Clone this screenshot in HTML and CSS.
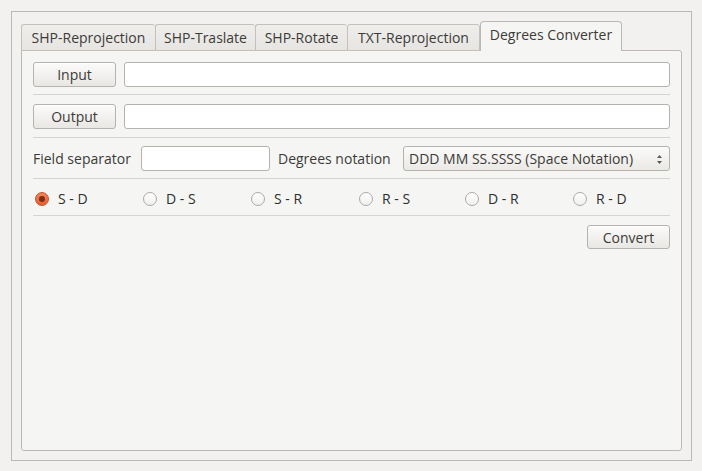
FILE: index.html
```html
<!DOCTYPE html>
<html>
<head>
<meta charset="utf-8">
<link rel="stylesheet" href="styles.css">
</head>
<body>
<div class="frame">
  <div class="tabbar">
    <div class="tab t1">SHP-Reprojection</div>
    <div class="tab t2">SHP-Traslate</div>
    <div class="tab t3">SHP-Rotate</div>
    <div class="tab t4">TXT-Reprojection</div>
    <div class="tab active t5">Degrees Converter</div>
  </div>
  <div class="pane">
    <div class="row r1">
      <button class="btn io">Input</button>
      <div class="field grow"></div>
    </div>
    <div class="sep s1"></div>
    <div class="row r2">
      <button class="btn io">Output</button>
      <div class="field grow"></div>
    </div>
    <div class="sep s2"></div>
    <div class="row r3">
      <span class="label lbl-sep">Field separator</span>
      <div class="field sepfield"></div>
      <span class="label lbl-not">Degrees notation</span>
      <div class="combo grow">
        <span>DDD MM SS.SSSS (Space Notation)</span>
        <svg class="arrows" width="7" height="11" viewBox="0 0 7 11"><path d="M3.5 1 L6 4 L1 4 Z" fill="#5a5955"/><path d="M3.5 10 L6 7 L1 7 Z" fill="#5a5955"/></svg>
      </div>
    </div>
    <div class="sep s3"></div>
    <div class="radios">
      <div class="radio"><span class="dot on"></span><span>S - D</span></div>
      <div class="radio"><span class="dot"></span><span>D - S</span></div>
      <div class="radio"><span class="dot"></span><span>S - R</span></div>
      <div class="radio"><span class="dot"></span><span>R - S</span></div>
      <div class="radio"><span class="dot"></span><span>D - R</span></div>
      <div class="radio"><span class="dot"></span><span>R - D</span></div>
    </div>
    <div class="sep s4"></div>
    <div class="row r5">
      <button class="btn convert">Convert</button>
    </div>
  </div>
</div>
</body>
</html>
```
FILE: styles.css
```css
* { box-sizing: border-box; }
html, body { margin: 0; padding: 0; }
body {
  background: #f2f1f0;
  font-family: "Open Sans", "DejaVu Sans", sans-serif;
  font-size: 14px;
  color: #3c3b37;
  width: 702px;
  height: 471px;
  overflow: hidden;
}
.frame {
  margin: 11px 0 0 11px;
  width: 681px;
  height: 450px;
  border: 1px solid #bcb9b4;
  padding: 9px 9px 9px 9px;
  display: flex;
  flex-direction: column;
}
.tabbar {
  display: flex;
  align-items: flex-end;
  height: 30px;
  margin-bottom: -1px;
  position: relative;
  z-index: 1;
}
.tab {
  height: 27px;
  line-height: 25px;
  text-align: center;
  background: linear-gradient(#efeeec, #e6e5e2);
  border: 1px solid #c4c1bc;
  border-right: none;
  border-radius: 3px 3px 0 0;
  color: #3c3b37;
  white-space: nowrap;
}
.t1 { width: 134px; }
.t2 { width: 100px; }
.t3 { width: 92px; }
.t4 { width: 133px; border-right: 1px solid #c4c1bc; }
.tab.active {
  width: 142px;
  height: 30px;
  line-height: 26px;
  background: #f5f5f4;
  border: 1px solid #bcb9b4;
  border-bottom: none;
  border-radius: 4px 4px 0 0;
  margin-left: 0;
}
.pane {
  flex: 1;
  width: 661px;
  background: #f5f5f4;
  border: 1px solid #bcb9b4;
  border-radius: 0 3px 3px 3px;
  padding: 11px 11px 0 11px;
  display: flex;
  flex-direction: column;
}
.row {
  display: flex;
  align-items: center;
  height: 25px;
}
.grow { flex: 1; }
.btn {
  font: inherit;
  color: #3c3b37;
  height: 25px;
  padding: 0;
  background: linear-gradient(#fbfbfa, #e9e7e4);
  border: 1px solid #b6b3ae;
  border-radius: 3px;
  box-shadow: inset 0 1px 0 #ffffff;
}
.io { width: 83px; margin-right: 8px; }
.field {
  height: 25px;
  background: #ffffff;
  border: 1px solid #b6b3ae;
  border-radius: 3px;
}
.sep {
  height: 1px;
  background: #d6d4d0;
}
.s1 { margin: 7px 0 9px; }
.s2 { margin: 8px 0 8px; }
.s3 { margin: 7px 0 0; }
.s4 { margin: 0 0 9px; }
.label { white-space: nowrap; flex: none; }
.lbl-sep { width: 99px; margin-right: 9px; }
.sepfield { width: 129px; margin-right: 8px; }
.lbl-not { width: 116px; margin-right: 9px; }
.combo {
  height: 25px;
  display: flex;
  align-items: center;
  justify-content: space-between;
  padding: 0 6px 0 5px;
  background: linear-gradient(#fbfbfa, #ebe9e6);
  border: 1px solid #b6b3ae;
  border-radius: 3px;
  white-space: nowrap;
}
.arrows { margin-top: 1px; }
.radios {
  display: flex;
  height: 36px;
  align-items: center;
  padding-left: 2px;
  padding-top: 3px;
  overflow: hidden;
}
.radio {
  width: 108px;
  flex: none;
  display: flex;
  align-items: center;
  color: #2f2e2b;
}
.radio:nth-child(5) { margin-left: -2px; }
.dot {
  width: 14px;
  height: 14px;
  border-radius: 50%;
  border: 1px solid #aeaba6;
  background: linear-gradient(#ffffff, #f0efed);
  margin-right: 9px;
  flex: none;
  display: flex;
  align-items: center;
  justify-content: center;
}
.dot.on {
  border-color: #c4532b;
  background: linear-gradient(#f3845a, #e4602f);
}
.dot.on::after {
  content: "";
  width: 6px;
  height: 6px;
  border-radius: 50%;
  background: #7e2d14;
}
.r5 {
  justify-content: flex-end;
  height: 24px;
}
.convert {
  width: 83px;
  height: 24px;
}
```
